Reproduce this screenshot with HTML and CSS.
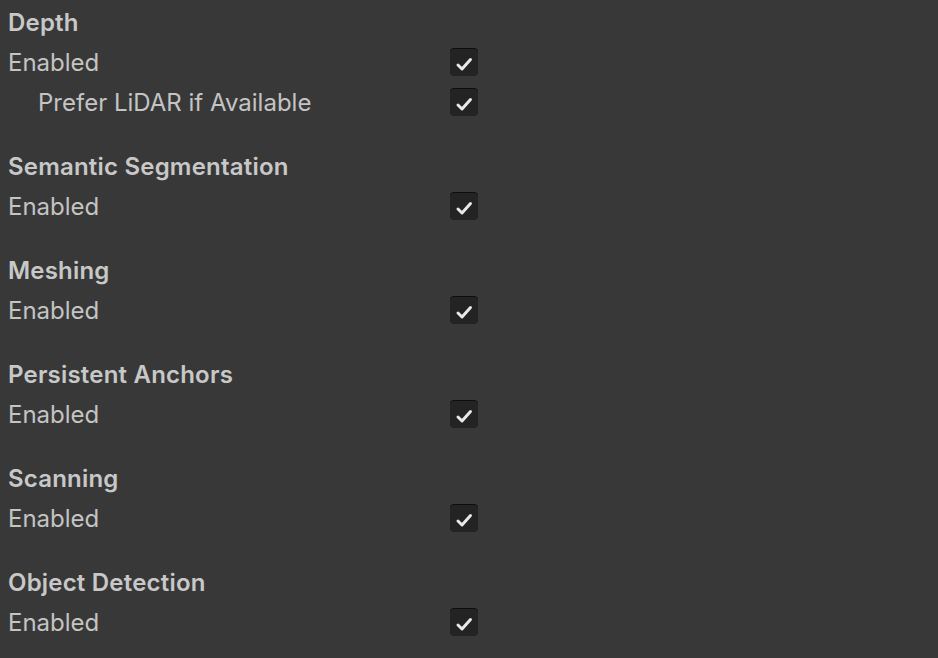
FILE: index.html
```html
<!DOCTYPE html>
<html>
<head>
<meta charset="utf-8">
<link rel="stylesheet" href="styles.css">
</head>
<body>
<div class="panel">
  <section class="group">
    <div class="header">Depth</div>
    <div class="row"><span class="label">Enabled</span><span class="check"><svg viewBox="0 0 28 28"><path d="M8 17 L12 21 L20.5 11.5"/></svg></span></div>
    <div class="row"><span class="label indent">Prefer LiDAR if Available</span><span class="check"><svg viewBox="0 0 28 28"><path d="M8 17 L12 21 L20.5 11.5"/></svg></span></div>
  </section>
  <section class="group">
    <div class="header">Semantic Segmentation</div>
    <div class="row"><span class="label">Enabled</span><span class="check"><svg viewBox="0 0 28 28"><path d="M8 17 L12 21 L20.5 11.5"/></svg></span></div>
  </section>
  <section class="group">
    <div class="header">Meshing</div>
    <div class="row"><span class="label">Enabled</span><span class="check"><svg viewBox="0 0 28 28"><path d="M8 17 L12 21 L20.5 11.5"/></svg></span></div>
  </section>
  <section class="group">
    <div class="header">Persistent Anchors</div>
    <div class="row"><span class="label">Enabled</span><span class="check"><svg viewBox="0 0 28 28"><path d="M8 17 L12 21 L20.5 11.5"/></svg></span></div>
  </section>
  <section class="group">
    <div class="header">Scanning</div>
    <div class="row"><span class="label">Enabled</span><span class="check"><svg viewBox="0 0 28 28"><path d="M8 17 L12 21 L20.5 11.5"/></svg></span></div>
  </section>
  <section class="group">
    <div class="header">Object Detection</div>
    <div class="row"><span class="label">Enabled</span><span class="check"><svg viewBox="0 0 28 28"><path d="M8 17 L12 21 L20.5 11.5"/></svg></span></div>
  </section>
</div>
</body>
</html>
```
FILE: styles.css
```css
html, body {
  margin: 0;
  padding: 0;
  background: #383838;
}
body {
  font-family: Inter, "Noto Sans", sans-serif;
  color: #c4c4c4;
  width: 938px;
  height: 658px;
  overflow: hidden;
}
.panel {
  display: flex;
  flex-direction: column;
  gap: 24px;
  padding: 2px 0 0 8px;
}
.header {
  height: 40px;
  display: flex;
  align-items: center;
  font-weight: 600;
  font-size: 24px;
  letter-spacing: 0.2px;
  color: #c8c8c8;
}
.row {
  height: 40px;
  display: flex;
  align-items: center;
}
.label {
  width: 442px;
  font-size: 24px;
}
.label.indent {
  padding-left: 30px;
  width: 412px;
}
.check {
  width: 28px;
  height: 28px;
  box-sizing: border-box;
  background: #232323;
  border-radius: 4px;
  border-top: 1px solid #0e0e0e;
  display: flex;
}
.check svg {
  width: 28px;
  height: 28px;
  margin-top: -1px;
}
.check path {
  fill: none;
  stroke: #e8e8e8;
  stroke-width: 3;
  stroke-linecap: round;
  stroke-linejoin: round;
}
```
